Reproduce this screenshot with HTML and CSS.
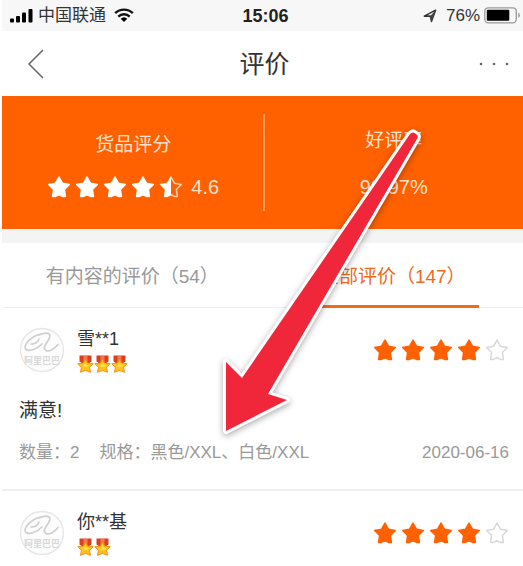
FILE: index.html
```html
<!DOCTYPE html>
<html lang="zh-CN">
<head>
<meta charset="utf-8">
<meta name="viewport" content="width=device-width">
<title>评价</title>
<link rel="stylesheet" href="styles.css">
</head>
<body>
<svg class="defs" aria-hidden="true">
  <defs>
    <symbol id="star" viewBox="0 0 24 24"><path d="M12 2l3.400 6.200 6.900 1.200-4.900 5.200 1 6.800H15.600L12 19.800 8.400 21.400H5.600L6.600 14.600 1.700 9.400l6.900-1.200z" stroke-linejoin="round" stroke-width="1.500"/></symbol>
    <symbol id="medal" viewBox="0 0 17 18">
      <path d="M2.500 0.500h12v6l-3 2H5.500l-3-2z" fill="#d9401f"/>
      <path d="M6.500 1h4v6h-4z" fill="#f2784b"/>
      <path d="M8.500 4.200l2.300 3.900 5.400.6-3.600 3.600.9 5-5-1.900-5 1.900.9-5L.8 8.700l5.400-.6z" fill="#ffc21c" stroke="#f08a12" stroke-width=".9" stroke-linejoin="round"/>
      <path d="M8.500 7.500l1.300 2.300 2.700.4-2 1.800-4.600-.6z" fill="#ffe04a"/>
    </symbol>
    <symbol id="logo" viewBox="0 0 46 46">
      <circle cx="23" cy="23" r="21.500" fill="#fdfdfd" stroke="#e6e6e6" stroke-width="1.300"/>
      <path d="M22 7C12 9 3 19 7 22.500c3 2.500 11-.5 16-5.500M20 8c9-4 13-1 10 4-3 5-7 9-3 11.500 3 1.500 8-1 12-6M12 17c4 0 7-2 8-5" fill="none" stroke="#cfcfcf" stroke-width="1.700" stroke-linecap="round"/>
    </symbol>
  </defs>
</svg>
<div class="app">
  <div class="status">
    <div class="carrier">
      <svg width="24" height="16" viewBox="0 0 24 16" aria-hidden="true"><rect x="0" y="10.500" width="4" height="4" rx="1"/><rect x="6" y="8" width="4" height="6.500" rx="1"/><rect x="12" y="4.500" width="4" height="10" rx="1"/><rect x="18.500" y="1" width="4" height="13.500" rx="1"/></svg>
      <span>中国联通</span>
      <svg class="wifi" width="20" height="15" viewBox="0 0 20 15" aria-hidden="true"><path d="M1.200 5.200a12.500 12.500 0 0 1 17.600 0M4.300 8.600a8 8 0 0 1 11.400 0" fill="none" stroke="#111" stroke-width="2.400"/><path d="M10 14l-3.300-3.200a4.800 4.800 0 0 1 6.600 0z"/></svg>
    </div>
    <span class="clock">15:06</span>
    <div class="power">
      <svg width="14" height="14" viewBox="0 0 14 14" aria-hidden="true"><path d="M1.300 7.200L12.600 1.200 8.500 12.500 7.300 7z" fill="none" stroke="#333" stroke-width="1.400" stroke-linejoin="round"/><path d="M7.300 7L12.600 1.200 8.500 12.500z" fill="#444"/></svg>
      <span>76%</span>
      <svg width="37" height="17" viewBox="0 0 37 17" aria-hidden="true"><rect x=".8" y=".8" width="31.500" height="15" rx="3.500" fill="none" stroke="#999" stroke-width="1.300"/><rect x="2.800" y="2.800" width="22.500" height="11" rx="1"/><path d="M34 5.500q2 .5 2 2.800t-2 2.800z" fill="#aaa"/></svg>
    </div>
  </div>
  <header class="nav">
    <button class="back" aria-label="返回"><svg width="18" height="32" viewBox="0 0 18 32"><path d="M16 2L2 16l14 14" fill="none" stroke="#666" stroke-width="1.500"/></svg></button>
    <h1>评价</h1>
    <button class="more" aria-label="更多"><svg width="32" height="4" viewBox="0 0 32 4"><circle cx="3" cy="2" r="1.300"/><circle cx="16" cy="2" r="1.300"/><circle cx="29" cy="2" r="1.300"/></svg></button>
  </header>
  <section class="summary">
    <div class="metric">
      <span class="label">货品评分</span>
      <div class="score"><span class="stars light"><svg><use href="#star"/></svg><svg><use href="#star"/></svg><svg><use href="#star"/></svg><svg><use href="#star"/></svg><svg viewBox="0 0 24 24"><use href="#star" class="outline"/><path class="half" d="M12 1.300v18.500L8.400 21.800H5.200L6 14.600 1.200 9.200l7.200-1.200z"/></svg></span><span>4.6</span></div>
    </div>
    <div class="metric rate">
      <span class="label">好评率</span>
      <span class="percent">99.97%</span>
    </div>
  </section>
  <nav class="tabs">
    <a href="#content">有内容的评价（54）</a>
    <a href="#all" class="active">全部评价（147）</a>
  </nav>
  <main>
    <article class="review">
      <div class="author">
        <div class="avatar"><svg><use href="#logo"/></svg><span>阿里巴巴</span></div>
        <div class="who"><span class="name">雪**1</span><span class="medals"><svg><use href="#medal"/></svg><svg><use href="#medal"/></svg><svg><use href="#medal"/></svg></span></div>
        <span class="stars"><svg><use href="#star"/></svg><svg><use href="#star"/></svg><svg><use href="#star"/></svg><svg><use href="#star"/></svg><svg class="empty"><use href="#star"/></svg></span>
      </div>
      <p class="comment">满意!</p>
      <div class="details"><span>数量：2</span><span>规格：黑色/XXL、白色/XXL</span><time datetime="2020-06-16">2020-06-16</time></div>
    </article>
    <article class="review">
      <div class="author">
        <div class="avatar"><svg><use href="#logo"/></svg><span>阿里巴巴</span></div>
        <div class="who"><span class="name">你**基</span><span class="medals"><svg><use href="#medal"/></svg><svg><use href="#medal"/></svg></span></div>
        <span class="stars"><svg><use href="#star"/></svg><svg><use href="#star"/></svg><svg><use href="#star"/></svg><svg><use href="#star"/></svg><svg class="empty"><use href="#star"/></svg></span>
      </div>
    </article>
  </main>
  <svg class="arrow" width="220" height="320" viewBox="210 125 220 320" aria-hidden="true"><path d="M410 134Q413 131 416 134 419 136 417 139L268 394 287 400 226 431 226 362 242 378Z"/></svg>
</div>
</body>
</html>
```
FILE: styles.css
```css
* { box-sizing: border-box; }
body {
  margin: 0;
  background: #fff;
  color: #333;
  font-family: "Liberation Sans", "Noto Sans CJK SC", sans-serif;
}
.defs { position: absolute; width: 0; height: 0; }
.app { position: relative; margin-left: 2px; overflow: hidden; }
svg { display: block; flex: none; }
button { border: 0; padding: 0; background: none; }

.status {
  display: grid;
  grid-template-columns: 1fr auto 1fr;
  align-items: center;
  height: 31px;
  padding: 0 2px 0 8px;
  background: #f7f7f7;
  font-size: 17px;
  line-height: 24px;
}
.carrier, .power { display: flex; align-items: center; }
.carrier { gap: 4px; }
.wifi { margin-left: 4px; }
.clock { font-size: 18px; font-weight: bold; color: #222; }
.power { justify-content: flex-end; gap: 4px; }
.power span { margin-left: 5px; }

.nav {
  display: grid;
  grid-template-columns: 1fr auto 1fr;
  align-items: center;
  height: 65px;
  padding: 0 13px 0 17px;
}
.nav h1 { margin: 0; font-size: 25px; font-weight: normal; line-height: 36px; }
.more { justify-self: end; fill: #666; }
.back { justify-self: start; padding-left: 8px; }

.summary {
  display: flex;
  height: 133px;
  padding: 18px 0 18px 2px;
  background: #ff6000;
  color: #ffe3cc;
  font-size: 19px;
  line-height: 28px;
}
.metric { flex: 1; display: flex; flex-direction: column; align-items: center; gap: 14px; padding-top: 17px; }
.rate { border-left: 2px solid #ff9a58; padding-top: 13px; gap: 18px; }
.score { display: flex; align-items: center; gap: 8px; }
.score, .percent { font-size: 20px; }
.stars { display: flex; gap: 4px; }
.stars svg { width: 24px; height: 24px; fill: #ff6000; stroke: #ff6000; }
.light svg { fill: #fff; stroke: #fff; }
.outline { fill: none; stroke: #ffd0ad; }
.half { stroke: none; }
.stars .empty { fill: #fff; stroke: #d8d8d8; }

.tabs { display: flex; border-top: 14px solid #f4f4f4; border-bottom: 1px solid #eee; }
.tabs a {
  flex: 1;
  position: relative;
  height: 64px;
  padding-top: 20px;
  text-align: center;
  text-decoration: none;
  color: #999;
  font-size: 19px;
  line-height: 28px;
}
.tabs .active { color: #ee6a20; }
.active::after { content: ""; position: absolute; left: 18%; right: 17%; bottom: -1px; height: 3px; background: #f56a1a; }

.review { padding: 19px 14px 24px 17px; border-bottom: 2px solid #eee; }
.review:last-child { border: 0; }
.author { display: flex; align-items: center; }
.avatar { position: relative; width: 46px; height: 46px; }
.avatar svg { width: 46px; height: 46px; }
.avatar span { position: absolute; left: 5px; top: 28px; font-size: 9px; line-height: 12px; font-weight: bold; color: #d8d8d8; white-space: nowrap; }
.who { flex: 1; display: flex; flex-direction: column; gap: 4px; margin-left: 12px; }
.name { font-size: 18px; line-height: 24px; }
.medals { display: flex; }
.medals svg { width: 17px; height: 18px; }
.comment { margin: 24px 0 16px; font-size: 19px; line-height: 28px; }
.details { display: flex; gap: 20px; color: #999; font-size: 17px; line-height: 24px; white-space: nowrap; }
.details time { margin-left: auto; }

.arrow { position: absolute; left: 208px; top: 125px; pointer-events: none; filter: drop-shadow(0 2px 3px #0005); }
.arrow path { fill: #f0263a; stroke: #fff; stroke-width: 6px; paint-order: stroke; stroke-linejoin: round; }
```
